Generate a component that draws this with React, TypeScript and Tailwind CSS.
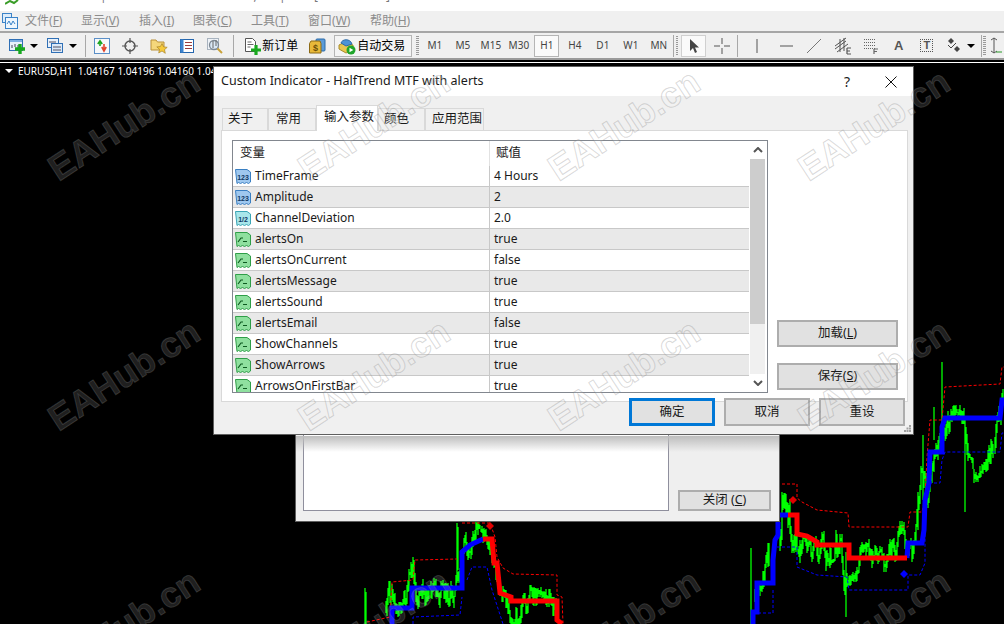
import React from "react";

const MENU = [
  { label: "文件", key: "F", cls: "w-[56px]" },
  { label: "显示", key: "V", cls: "w-[58px]" },
  { label: "插入", key: "I", cls: "w-[54px]" },
  { label: "图表", key: "C", cls: "w-[58px]" },
  { label: "工具", key: "T", cls: "w-[57px]" },
  { label: "窗口", key: "W", cls: "w-[62px]" },
  { label: "帮助", key: "H", cls: "w-[60px]" },
];

const TIMEFRAMES = ["M1", "M5", "M15", "M30", "H1", "H4", "D1", "W1", "MN"];

const PARAMS = [
  { name: "TimeFrame", value: "4 Hours", type: "int" },
  { name: "Amplitude", value: "2", type: "int" },
  { name: "ChannelDeviation", value: "2.0", type: "float" },
  { name: "alertsOn", value: "true", type: "bool" },
  { name: "alertsOnCurrent", value: "false", type: "bool" },
  { name: "alertsMessage", value: "true", type: "bool" },
  { name: "alertsSound", value: "true", type: "bool" },
  { name: "alertsEmail", value: "false", type: "bool" },
  { name: "ShowChannels", value: "true", type: "bool" },
  { name: "ShowArrows", value: "true", type: "bool" },
  { name: "ArrowsOnFirstBar", value: "true", type: "bool" },
];

const MARKS = [
  "left-[124px] top-[125px]",
  "left-[374px] top-[125px]",
  "left-[624px] top-[125px]",
  "left-[874px] top-[125px]",
  "left-[124px] top-[375px]",
  "left-[374px] top-[375px]",
  "left-[624px] top-[375px]",
  "left-[874px] top-[375px]",
  "left-[124px] top-[625px]",
  "left-[374px] top-[625px]",
  "left-[624px] top-[625px]",
  "left-[874px] top-[625px]",
];

// [x, top, bottom] envelope of the price bars
const GREEN: number[][][] = [
  [[386, 590, 624], [392, 572, 620], [397, 570, 612], [404, 572, 604], [412, 558, 600], [416, 556, 598],
   [420, 585, 606], [430, 586, 612], [438, 582, 612], [444, 586, 624], [452, 576, 604], [456, 560, 592],
   [462, 526, 560], [470, 524, 552], [482, 530, 556], [488, 540, 560], [491, 552, 586],
   [496, 562, 600], [500, 588, 612], [510, 596, 624], [520, 600, 624], [530, 590, 624], [540, 594, 624], [550, 594, 620], [557, 600, 624]],
  [[755, 560, 624], [758, 530, 590], [764, 527, 585], [770, 520, 572]],
  [[780, 492, 570], [786, 500, 576], [792, 510, 583], [797, 525, 568], [805, 538, 576], [812, 545, 578], [820, 540, 575],
   [830, 530, 560], [838, 520, 562], [844, 540, 590], [850, 558, 580], [860, 545, 572],
   [870, 546, 574], [880, 552, 570], [890, 540, 570], [900, 528, 562], [908, 526, 550], [914, 540, 568],
   [918, 500, 540], [923, 445, 520], [928, 440, 500], [932, 420, 470], [938, 410, 452],
   [946, 392, 430], [952, 408, 428], [958, 410, 428], [963, 412, 432], [967, 450, 482],
   [972, 462, 480], [978, 452, 476], [984, 440, 466], [990, 434, 464], [994, 404, 448], [998, 384, 420], [1004, 386, 418]],
];

const SPIKES = "M365 588V624M366 592V624M751 548V624M846 552V617M965 420V512M942 362V430M923 435V500M918 492V530M457 523V580M458 527V570M782 492V540M934 407V440";

function greenPath() {
  let seed = 11;
  const rnd = () => {
    seed = (seed * 9301 + 49297) % 233280;
    return seed / 233280;
  };
  let d = SPIKES;
  for (const run of GREEN) {
    let prev = (run[0][1] + run[0][2]) / 2;
    for (let i = 0; i < run.length - 1; i++) {
      const [x1, t1, b1] = run[i];
      const [x2, t2, b2] = run[i + 1];
      for (let x = x1; x < x2; x += 1) {
        const k = (x - x1) / (x2 - x1);
        const t = t1 + (t2 - t1) * k;
        const b = b1 + (b2 - b1) * k;
        const next = Math.min(b, Math.max(t, prev + (rnd() - 0.5) * (b - t) * 0.8));
        const top = Math.min(prev, next) - rnd() * 7;
        const bot = Math.max(prev, next) + rnd() * 7;
        d += `M${x} ${top.toFixed(0)}V${bot.toFixed(0)}`;
        prev = next;
      }
    }
  }
  return d;
}

function ChartLines() {
  return (
    <svg className="absolute left-0 top-[-63px]" width="1004" height="624" viewBox="0 0 1004 624">
      <path d={greenPath()} stroke="#00ff00" strokeWidth="1.3" fill="none" />
      {/* upper channel */}
      <path
        d="M367 622L390 617L392 582L413 580L415 560L457 559M462 523H490L495 537L497 557L503 568L513 574L557 575V595L562 597L563 624M782 484H797V498L802 502L817 510L848 513L849 527H908L910 512H922L925 498L927 457L930 420H942L945 387L963 386L1000 384L1002 367H1004"
        stroke="#ff0000"
        strokeWidth="1"
        strokeDasharray="3 2"
        fill="none"
      />
      {/* lower channel */}
      <path
        d="M413 624V617L460 615L462 597M467 580L472 567H487L492 590L503 624M753 613H773V590M777 547H797V567L817 575L847 577L849 590H908V575H920L925 563V530M929 483H940L942 460L945 452H1000L1002 433H1004"
        stroke="#0000ff"
        strokeWidth="1"
        strokeDasharray="3 2"
        fill="none"
      />
      {/* half trend */}
      <path
        d="M392 624V608H412V588H462V552L470 545L483 539M753 624V612H757V583H773V560L775 540L778 535V522M780 515H788M907 558L908 543H922L924 530L925 500L929 483L930 452H942V427L945 418H1000L1002 400H1004"
        stroke="#0000ff"
        strokeWidth="5"
        fill="none"
      />
      <path
        d="M483 539H492L494 563H497L500 593L511 597V601H557V620L562 624M788 515H797V534L807 536L817 542V545H849V558H907"
        stroke="#ff0000"
        strokeWidth="5"
        fill="none"
      />
      <path d="M490 522l4 4l-4 4l-4-4zM793 496l4 4l-4 4l-4-4z" fill="#e00000" />
      <path d="M904 570l4 4l-4 4l-4-4z" fill="#0000ff" />
    </svg>
  );
}

function ChartWindowIcon({ plus }: { plus?: boolean }) {
  return (
    <svg width="18" height="18" viewBox="0 0 18 18">
      <rect x="1.5" y="2.5" width="13" height="11" fill="#e8f1fb" stroke="#2f6fb5" />
      <rect x="2" y="3" width="12" height="2" fill="#7fb0e3" />
      <path d="M4 8v3M7 7v3M10 8v3" stroke="#445" />
      {plus && <path d="M12 7v10M7 12h10" stroke="#18a81e" strokeWidth="3.4" />}
    </svg>
  );
}

function StackIcon() {
  return (
    <svg width="18" height="18" viewBox="0 0 18 18">
      <rect x="1.5" y="1.5" width="11" height="9" fill="#e8f1fb" stroke="#2f6fb5" />
      <rect x="5.5" y="6.5" width="11" height="9" fill="#dbe9f8" stroke="#2f6fb5" />
      <path d="M3 5h7M7 10h8M7 13h8" stroke="#556" />
    </svg>
  );
}

function MarketIcon() {
  return (
    <svg width="16" height="16" viewBox="0 0 16 16">
      <rect x="0.5" y="0.5" width="15" height="15" fill="#f6f8fb" stroke="#5b8fc7" />
      <path d="M6 8V4M3.8 6L6 2.8L8.2 6" stroke="#1aa51f" strokeWidth="1.6" fill="none" />
      <path d="M10 6v5M7.8 9L10 13L12.2 9" stroke="#e2452c" strokeWidth="1.6" fill="none" />
    </svg>
  );
}

function CrossIcon() {
  return (
    <svg width="16" height="16" viewBox="0 0 16 16" fill="none" stroke="#555">
      <circle cx="8" cy="8" r="5" strokeWidth="1.4" />
      <path d="M8 0v5M8 11v5M0 8h5M11 8h5" strokeWidth="1.2" />
    </svg>
  );
}

function FolderStarIcon() {
  return (
    <svg width="18" height="18" viewBox="0 0 18 18">
      <path d="M1 3h5l1.5 2H14v8H1z" fill="#f4d77b" stroke="#b9913a" />
      <path d="M12 6.5l1.6 3.4l3.6.4l-2.7 2.4l.8 3.6L12 14l-3.3 1.9l.8-3.6l-2.7-2.4l3.6-.4z" fill="#f5c93a" stroke="#a9842a" strokeWidth="0.7" />
    </svg>
  );
}

function ListIcon() {
  return (
    <svg width="16" height="16" viewBox="0 0 16 16">
      <rect x="1.5" y="1.5" width="13" height="13" fill="#fff" stroke="#2566ad" />
      <rect x="1.5" y="1.5" width="3" height="13" fill="#3d84cf" />
      <path d="M6 4.5h7M6 7.5h7M6 10.5h7" stroke="#9a3d3d" />
    </svg>
  );
}

function SearchIcon() {
  return (
    <svg width="18" height="18" viewBox="0 0 18 18" fill="none">
      <rect x="1.5" y="1.5" width="11" height="11" fill="#eef2f7" stroke="#a8b3bf" />
      <circle cx="8" cy="8" r="4.5" fill="#dbe9f6" stroke="#7d8894" strokeWidth="1.3" />
      <path d="M7 4v7M10 3v6" stroke="#666" />
      <path d="M11.5 11.5L16 16" stroke="#c9a23a" strokeWidth="2" />
    </svg>
  );
}

function OrderIcon() {
  return (
    <svg width="18" height="18" viewBox="0 0 18 18">
      <path d="M2.5 1.5h7l3 3v10h-10z" fill="#fff" stroke="#555" />
      <path d="M4.5 5h4M4.5 7.5h6M4.5 10h3" stroke="#666" />
      <path d="M13 8v10M8 13h10" stroke="#18a81e" strokeWidth="3.2" />
    </svg>
  );
}

function WalletIcon() {
  return (
    <svg width="18" height="18" viewBox="0 0 18 18">
      <rect x="8" y="2" width="9" height="12" rx="1" fill="#5b9bd8" stroke="#2a6aa8" />
      <path d="M1.5 6.5L3 4h9l1 2.5V16H1.5z" fill="#e8b93a" stroke="#8c6a16" />
      <text x="7.5" y="14" fontSize="9" fontWeight="700" textAnchor="middle" fill="#6b4e08" fontFamily="Liberation Sans, sans-serif">$</text>
    </svg>
  );
}

function AutoTradeIcon() {
  return (
    <svg width="18" height="18" viewBox="0 0 18 18">
      <path d="M1 8L7 5l8 3v5l-7 3l-7-4z" fill="#e9c64e" stroke="#a88b2c" />
      <path d="M3 6c1-4 9-5 11 1L8 9z" fill="#4c93d6" stroke="#2c6aa5" />
      <circle cx="13" cy="13" r="4.5" fill="#20a52a" />
      <path d="M11.5 10.8v4.4L15.3 13z" fill="#fff" />
    </svg>
  );
}

function MenuLogo() {
  return (
    <svg width="16" height="18" viewBox="0 0 16 18">
      <rect x="0.5" y="1.5" width="9" height="9" fill="#dcecfa" stroke="#3b83c8" />
      <rect x="3.5" y="5.5" width="12" height="11" fill="#eef6fd" stroke="#3b83c8" />
      <path d="M5 12l2-3l2 4l2-4l2 3" stroke="#3b83c8" fill="none" />
    </svg>
  );
}

function Caret() {
  return <div className="w-0 h-0 border-x-[4px] border-x-transparent border-t-[4px] border-t-black" />;
}

function Grip() {
  return <div className="w-[4px] h-[20px] mx-[2px] bg-[repeating-linear-gradient(to_bottom,#9a9a9a_0,#9a9a9a_1px,#f0f0f0_1px,#f0f0f0_2px)]" />;
}

function Sep() {
  return <div className="w-px h-[22px] bg-[#a8a8a8]" />;
}

function Slot({ cls, children }: { cls: string; children?: React.ReactNode }) {
  return <div className={`flex items-center justify-center h-full shrink-0 ${cls}`}>{children}</div>;
}

function ParamIcon({ type }: { type: string }) {
  if (type === "bool") {
    return (
      <svg width="16" height="16" viewBox="0 0 16 16" className="shrink-0">
        <path d="M0.5 1.5H12l3.5 2.5V14l-2 1.5l-2-1l-2 1l-2-1l-2 1l-2-1l-1.5 1z" fill="#8fe09f" stroke="#2f9e48" />
        <path d="M3 11l3-4h2M8 10.5h4" stroke="#0d5a20" strokeWidth="1.2" fill="none" />
      </svg>
    );
  }
  const fill = type === "int" ? "#9fc8ef" : "#a8e6ea";
  const stroke = type === "int" ? "#3a7fc2" : "#3aa5b5";
  return (
    <svg width="16" height="16" viewBox="0 0 16 16" className="shrink-0">
      <path d="M0.5 1.5H12l3.5 2.5V14l-2 1.5l-2-1l-2 1l-2-1l-2 1l-2-1l-1.5 1z" fill={fill} stroke={stroke} />
      <text x="8" y="12" fontSize="7" fontWeight="700" textAnchor="middle" fill="#103a66" fontFamily="Liberation Sans, sans-serif">
        {type === "int" ? "123" : "1/2"}
      </text>
    </svg>
  );
}

function ParamRow({ name, value, type, index }: { name: string; value: string; type: string; index: number }) {
  return (
    <div className={`flex h-[21px] shrink-0 border-b border-[#c8c8c8] text-[12px] ${index % 2 === 1 ? "bg-[#e9e9e9]" : "bg-white"}`}>
      <div className="flex items-center gap-[4px] w-[257px] pl-[2px] border-r border-[#c8c8c8] shrink-0">
        <ParamIcon type={type} />
        <span>{name}</span>
      </div>
      <div className="flex items-center pl-[4px]">{value}</div>
    </div>
  );
}

function ParamTable() {
  return (
    <div className="flex w-[536px] h-[253px] border border-[#82878f] bg-white shrink-0">
      <div className="flex flex-col w-[516px] overflow-hidden">
        <div className="flex h-[25px] shrink-0">
          <div className="flex items-center w-[257px] pl-[7px] border-r border-[#e2e2e2]">变量</div>
          <div className="flex items-center pl-[6px]">赋值</div>
        </div>
        {PARAMS.map((p, i) => (
          <ParamRow key={p.name} name={p.name} value={p.value} type={p.type} index={i} />
        ))}
      </div>
      <div className="flex flex-col w-[15px] ml-px shrink-0 bg-[#f0f0f0]">
        <div className="flex items-center justify-center h-[18px] shrink-0 bg-white text-[#555]">
          <svg width="10" height="6" viewBox="0 0 10 6" fill="none" stroke="#555" strokeWidth="2"><path d="M1 5l4-4l4 4" /></svg>
        </div>
        <div className="h-[165px] bg-[#cdcdcd]" />
        <div className="flex-1" />
        <div className="flex items-center justify-center h-[18px] shrink-0 bg-white">
          <svg width="10" height="6" viewBox="0 0 10 6" fill="none" stroke="#555" strokeWidth="2"><path d="M1 1l4 4l4-4" /></svg>
        </div>
      </div>
    </div>
  );
}

function WinButton({ cls, children, primary }: { cls: string; children: React.ReactNode; primary?: boolean }) {
  return (
    <button className={`flex items-center justify-center bg-[#e1e1e1] ${primary ? "border-[3px] border-[#0078d7]" : "border-2 border-[#adadad]"} ${cls}`}>
      {children}
    </button>
  );
}

function Tab({ cls, active, children }: { cls: string; active?: boolean; children: React.ReactNode }) {
  return (
    <div
      className={
        active
          ? `relative z-10 flex items-center h-[26px] pb-[3px] -mb-px bg-white border border-b-0 border-[#d9d9d9] ${cls}`
          : `flex items-center h-[22px] pb-[1px] bg-[#f0f0f0] border border-b-0 border-[#d9d9d9] ${cls}`
      }
    >
      {children}
    </div>
  );
}

function IndicatorDialog() {
  return (
    <div className="absolute left-[213px] top-[66px] flex flex-col w-[701px] h-[369px] bg-[#f0f0f0] border border-[#5f5f5f] text-[12.5px] text-[#1a1a1a] z-10">
      <div className="flex items-center h-[29px] pl-[7px] bg-white shrink-0">
        <span className="flex-1">Custom Indicator - HalfTrend MTF with alerts</span>
        <span className="w-[44px] -ml-[16px] mr-[16px] text-center text-[14px]">?</span>
        <svg width="12" height="12" viewBox="0 0 12 12" className="mr-[16px]" stroke="#111" fill="none"><path d="M0.5 0.5l11 11M11.5 0.5l-11 11" /></svg>
      </div>
      <div className="flex items-end h-[34px] pl-[8px] shrink-0">
        <Tab cls="w-[46px] pl-[5px]">关于</Tab>
        <Tab cls="w-[48px] pl-[7px]">常用</Tab>
        <Tab active cls="w-[62px] pl-[7px]">输入参数</Tab>
        <Tab cls="w-[47px] pl-[5px]">颜色</Tab>
        <Tab cls="w-[59px] pl-[6px]">应用范围</Tab>
      </div>
      <div className="flex mx-[7px] w-[687px] h-[272px] pl-[10px] pt-[9px] bg-white border border-[#d9d9d9] shrink-0">
        <ParamTable />
        <div className="flex flex-col justify-end gap-[16px] ml-[9px] w-[121px] h-[253px] pb-[3px]">
          <WinButton cls="w-[121px] h-[27px]">加载(<u>L</u>)</WinButton>
          <WinButton cls="w-[121px] h-[27px]">保存(<u>S</u>)</WinButton>
        </div>
      </div>
      <div className="relative flex justify-end gap-[9px] pr-[8px] -mt-[4px]">
        <WinButton primary cls="w-[86px] h-[28px]">确定</WinButton>
        <WinButton cls="w-[86px] h-[28px]">取消</WinButton>
        <WinButton cls="w-[86px] h-[28px]">重设</WinButton>
      </div>
      <svg width="7" height="7" viewBox="0 0 7 7" className="absolute right-[2px] bottom-[2px]" fill="#a0a0a0">
        <rect x="5" y="0" width="2" height="2" /><rect x="2.5" y="2.5" width="2" height="2" /><rect x="5" y="2.5" width="2" height="2" />
        <rect x="0" y="5" width="2" height="2" /><rect x="2.5" y="5" width="2" height="2" /><rect x="5" y="5" width="2" height="2" />
      </svg>
    </div>
  );
}

function BackDialog() {
  return (
    <div className="absolute left-[295px] top-[400px] flex w-[485px] h-[122px] px-[7px] pb-[10px] gap-[9px] bg-[#efefef] border border-[#5f5f5f] text-[12.5px] text-[#1a1a1a]">
      <div className="w-[366px] h-full bg-white border border-[#8f8f9d]" />
      <div className="flex flex-col justify-end">
        <WinButton cls="w-[93px] h-[21px]">关闭 (<u>C</u>)</WinButton>
      </div>
      <div className="absolute left-0 right-0 top-[35px] h-[16px] bg-gradient-to-b from-[#bdbdbd] to-transparent" />
    </div>
  );
}

export default function App() {
  return (
    <div className="relative flex flex-col w-[1004px] h-[624px] overflow-hidden bg-black font-['Noto_Sans','Noto_Sans_CJK_SC',sans-serif]">
      {/* cropped window title */}
      <div className="relative h-[11px] bg-white overflow-hidden shrink-0 text-[#777] text-[12px] leading-none">
        <svg width="14" height="5" viewBox="0 0 14 5" className="absolute left-[5px] top-0"><path d="M0 4L5 1L9 3L13 0" stroke="#3a9d28" strokeWidth="2" fill="none" /></svg>
        <span className="absolute left-[100px] -top-[10px]">|</span>
        <span className="absolute left-[207px] -top-[10px]">EURUSD,H1</span>
        <span className="absolute left-[279px] -top-[10px]">|</span>
        <span className="absolute left-[314px] -top-[10px]">[</span>
        <span className="absolute left-[386px] -top-[10px]">]</span>
      </div>

      {/* menu */}
      <div className="flex items-center h-[20px] bg-[#f0f0f0] text-[12px] text-[#8c8c8c] shrink-0">
        <div className="flex items-center w-[25px] pl-[2px] shrink-0"><MenuLogo /></div>
        {MENU.map((m) => (
          <div key={m.label} className={`shrink-0 ${m.cls}`}>
            {m.label}(<u>{m.key}</u>)
          </div>
        ))}
      </div>

      {/* toolbar */}
      <div className="flex items-center h-[29px] bg-[#f0f0f0] border-y-2 border-[#a6a6a6] border-b-[#9a9a9a] shrink-0 text-[12px] text-black">
        <Slot cls="w-[30px] pl-[4px]"><ChartWindowIcon plus /></Slot>
        <Slot cls="w-[8px]"><Caret /></Slot>
        <Slot cls="w-[5px]" />
        <Slot cls="w-[24px]"><StackIcon /></Slot>
        <Slot cls="w-[2px]" />
        <Slot cls="w-[8px]"><Caret /></Slot>
        <Slot cls="w-[8px]" />
        <Sep />
        <Slot cls="w-[2px]" />
        <Slot cls="w-[28px]"><MarketIcon /></Slot>
        <Slot cls="w-[29px]"><CrossIcon /></Slot>
        <Slot cls="w-[28px]"><FolderStarIcon /></Slot>
        <Slot cls="w-[28px]"><ListIcon /></Slot>
        <Slot cls="w-[29px]"><SearchIcon /></Slot>
        <Slot cls="w-[3px]" />
        <Sep />
        <Slot cls="w-[9px]" />
        <Slot cls="w-[19px]"><OrderIcon /></Slot>
        <span className="w-[46px] pl-[1px] shrink-0">新订单</span>
        <Slot cls="w-[20px]"><WalletIcon /></Slot>
        <Slot cls="w-[7px]" />
        <div className="flex items-center gap-[1px] w-[78px] h-[22px] pl-[3px] border border-[#b5b5b5] bg-[#f4f4f4] shrink-0">
          <AutoTradeIcon />
          <span>自动交易</span>
        </div>
        <Slot cls="w-[2px]" />
        <Grip />
        {TIMEFRAMES.map((t) => (
          <Slot key={t} cls="w-[28px]">
            <span
              className={
                t === "H1"
                  ? "flex items-center justify-center w-[25px] h-[22px] border border-[#b5b5b5] bg-[#fafafa] text-[10px] text-[#444]"
                  : "text-[10px] text-[#444]"
              }
            >
              {t}
            </span>
          </Slot>
        ))}
        <Sep />
        <Grip />
        <Slot cls="w-[27px]">
          <span className="flex items-center justify-center w-[25px] h-[22px] border border-[#d0d0d0] bg-[#fafafa]">
            <svg width="10" height="14" viewBox="0 0 10 14" fill="#444"><path d="M1 0v12l3-3l2 5l2-1l-2-4.5h4z" /></svg>
          </span>
        </Slot>
        <Slot cls="w-[30px]">
          <svg width="16" height="16" viewBox="0 0 16 16" stroke="#555"><path d="M8 0v6M8 10v6M0 8h6M10 8h6" /></svg>
        </Slot>
        <Sep />
        <Slot cls="w-[3px]" />
        <Slot cls="w-[33px]">
          <svg width="2" height="14" viewBox="0 0 2 14" stroke="#555"><path d="M1 0v14" /></svg>
        </Slot>
        <Slot cls="w-[25px]">
          <svg width="13" height="2" viewBox="0 0 13 2" stroke="#555"><path d="M0 1h13" /></svg>
        </Slot>
        <Slot cls="w-[30px]">
          <svg width="14" height="14" viewBox="0 0 14 14" stroke="#777"><path d="M0 14L14 0" /></svg>
        </Slot>
        <Slot cls="w-[28px]">
          <svg width="18" height="18" viewBox="0 0 18 18" fill="none" stroke="#555">
            <path d="M1 12l11-8M1 9l11-8M3 15l11-8M6 2v13M10 1v13" />
            <path d="M13 11v6M13 11h4M13 14h3M13 17h4" strokeWidth="1.2" />
          </svg>
        </Slot>
        <Slot cls="w-[28px]">
          <svg width="16" height="16" viewBox="0 0 16 16" fill="none" stroke="#666">
            <path d="M1 1.5h12M1 4.5h12M1 7.5h12M1 10.5h12" strokeDasharray="1 1" />
            <path d="M11 11v5M11 11h4M11 13.5h3" strokeWidth="1.2" />
          </svg>
        </Slot>
        <Slot cls="w-[28px]"><span className="font-['Liberation_Sans'] text-[13px] font-bold text-[#555]">A</span></Slot>
        <Slot cls="w-[28px]">
          <span className="flex items-center justify-center w-[13px] h-[13px] border border-dotted border-[#555] font-['Liberation_Sans'] text-[11px] font-bold text-[#555]">T</span>
        </Slot>
        <Slot cls="w-[26px]">
          <svg width="15" height="15" viewBox="0 0 15 15" fill="#444"><path d="M5 0l3 3l-3 3l-3-3z" /><path d="M2 7l3 3l5-5" fill="none" stroke="#444" /><path d="M11 8l3 3l-3 3l-3-3z" /></svg>
        </Slot>
        <Slot cls="w-[8px]"><Caret /></Slot>
        <Slot cls="w-[6px]" />
        <Sep />
        <Grip />
        <Slot cls="w-[16px]">
          <svg width="12" height="18" viewBox="0 0 12 18" stroke="#555" fill="none"><path d="M4 1v15M1 3l3-2l3 2M1 14l3 2l3-2" /><path d="M6 15h6" stroke="#2a9a2a" /></svg>
        </Slot>
      </div>

      {/* strip between the toolbar and the chart */}
      <div className="h-[2px] bg-black shrink-0" />
      <div className="h-[1px] bg-white shrink-0" />

      {/* chart */}
      <div className="relative flex-1">
        <ChartLines />
        <div className="absolute left-[5px] top-[1px] flex items-center h-[14px] text-[10px] text-white whitespace-nowrap">
          <span className="mr-[5px] w-0 h-0 border-x-[4px] border-x-transparent border-t-[4px] border-t-white" />
          <span>EURUSD,H1&nbsp;&nbsp;1.04167 1.04196 1.04160 1.04196</span>
        </div>
      </div>

      <BackDialog />
      <IndicatorDialog />

      {/* watermark */}
      {MARKS.map((cls) => (
        <div
          key={cls}
          className={`absolute z-20 -translate-x-1/2 -translate-y-1/2 -rotate-[33deg] whitespace-nowrap font-['Liberation_Sans'] text-[36px] font-bold leading-none text-white/15 [-webkit-text-stroke:1px_rgba(128,128,128,0.3)] pointer-events-none ${cls}`}
        >
          EAHub.cn
        </div>
      ))}
    </div>
  );
}
